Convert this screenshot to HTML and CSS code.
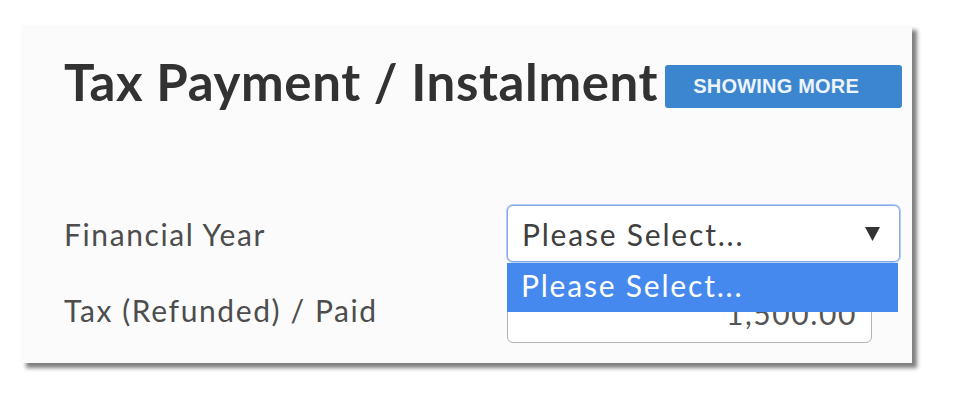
FILE: index.html
```html
<!DOCTYPE html>
<html lang="en">
<head>
<meta charset="utf-8">
<title>Tax Payment / Instalment</title>
<link rel="stylesheet" href="styles.css">
</head>
<body>
  <section class="panel">
    <header class="panel-head">
      <h1 class="panel-title">Tax Payment / Instalment</h1>
      <span class="badge">SHOWING MORE</span>
    </header>

    <div class="form">
      <div class="row">
        <label class="label" for="fy">Financial Year</label>
        <div class="control">
          <div class="select is-open" id="fy">
            <span class="select-value">Please Select...</span>
            <svg class="select-arrow" width="15" height="15" viewBox="0 0 15 15" aria-hidden="true">
              <polygon points="0,1 15,1 7.5,15" fill="#333"/>
            </svg>
          </div>
          <ul class="options">
            <li class="option is-active">Please Select...</li>
          </ul>
        </div>
      </div>

      <div class="row row-amount">
        <label class="label" for="paid">Tax (Refunded) / Paid</label>
        <div class="control">
          <div class="input" id="paid">1,500.00</div>
        </div>
      </div>
    </div>
  </section>
</body>
</html>
```

FILE: styles.css
```css
* {
  box-sizing: border-box;
}

html,
body {
  height: 100%;
}

body {
  margin: 0;
  padding-top: 25px;
  background: #ffffff;
  font-family: Lato, "Open Sans", sans-serif;
}

.panel {
  margin-left: 21px;
  width: 891px;
  height: 338px;
  padding: 31px 0 0 43px;
  background: #fbfbfb;
  box-shadow: 5px 5px 4px rgba(0, 0, 0, 0.5);
}

.panel-head {
  display: flex;
  align-items: flex-start;
  gap: 7px;
}

.panel-title {
  margin: 0;
  font-size: 51px;
  line-height: 51px;
  font-weight: 700;
  letter-spacing: 0.62px;
  color: #323232;
  white-space: nowrap;
}

.badge {
  margin-top: 9px;
  width: 237px;
  height: 43px;
  padding-left: 28px;
  display: flex;
  align-items: center;
  background: #3b86cf;
  border-radius: 3px;
  color: #eef4fb;
  font-family: "Liberation Sans", Arial, sans-serif;
  font-weight: 700;
  font-size: 20px;
  letter-spacing: 0.2px;
}

.form {
  margin-top: 97px;
  display: flex;
  flex-direction: column;
  gap: 20px;
}

.row {
  display: grid;
  grid-template-columns: 443px 393px;
  align-items: center;
}

.row-amount {
  align-items: start;
}

.row-amount .label {
  margin-top: 10px;
}

.label {
  font-size: 30px;
  line-height: 36px;
  letter-spacing: 1.6px;
  color: #4d4d4d;
}

.control {
  position: relative;
}

.select {
  height: 57px;
  display: flex;
  align-items: center;
  justify-content: space-between;
  padding: 0 19px 0 14px;
  background: #ffffff;
  border: 1px solid #86abe8;
  border-radius: 6px;
  box-shadow: 0 0 0 1px rgba(120, 165, 235, 0.55);
  font-size: 30px;
  line-height: 36px;
  letter-spacing: 1.8px;
  color: #3f3f3f;
}

/* open option list hangs below the select and covers the next field */
.options {
  position: absolute;
  top: 58px;
  left: 0;
  width: 391px;
  margin: 0;
  padding: 0;
  list-style: none;
  z-index: 2;
}

.option {
  height: 49px;
  padding: 4px 0 0 14px;
  background: #4589ef;
  color: #ffffff;
  font-size: 30px;
  line-height: 36px;
  letter-spacing: 1.8px;
}

.input {
  width: 365px;
  height: 61px;
  display: flex;
  align-items: center;
  justify-content: flex-end;
  padding-right: 14px;
  background: #ffffff;
  border: 1px solid #b4b4b4;
  border-radius: 6px;
  font-size: 30px;
  line-height: 36px;
  letter-spacing: 1.6px;
  color: #555555;
}
```
